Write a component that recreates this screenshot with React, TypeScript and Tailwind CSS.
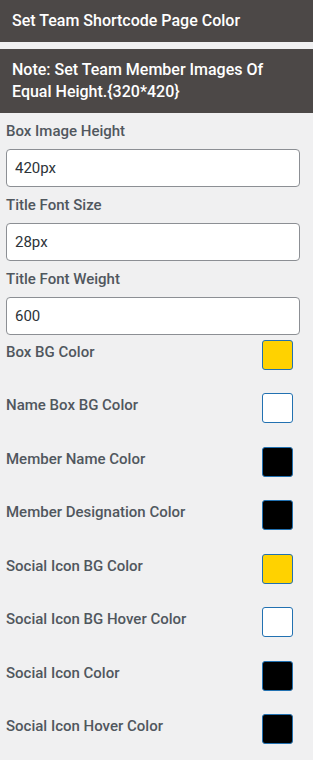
const fields = [
  { label: "Box Image Height", value: "420px" },
  { label: "Title Font Size", value: "28px" },
  { label: "Title Font Weight", value: "600" },
];

const colors = [
  { label: "Box BG Color", color: "bg-[#ffd200]" },
  { label: "Name Box BG Color", color: "bg-white" },
  { label: "Member Name Color", color: "bg-black" },
  { label: "Member Designation Color", color: "bg-black" },
  { label: "Social Icon BG Color", color: "bg-[#ffd200]" },
  { label: "Social Icon BG Hover Color", color: "bg-white" },
  { label: "Social Icon Color", color: "bg-black" },
  { label: "Social Icon Hover Color", color: "bg-black" },
];

export default function App() {
  return (
    <div className="min-h-screen bg-[#f0f0f1] font-['Roboto',sans-serif]">
      <div className="flex h-[42px] items-center bg-[#4c4847] px-3 text-[16px] font-medium text-white">
        Set Team Shortcode Page Color
      </div>
      <div className="mt-[7px] bg-[#4c4847] px-3 py-[10px] text-[16px] font-medium leading-[22px] text-white">
        <p>Note: Set Team Member Images Of</p>
        <p>Equal Height.{"{320*420}"}</p>
      </div>

      <div className="pl-[6px] pr-[13px]">
        {fields.map((f) => (
          <div key={f.label}>
            <label className="mt-2 mb-2 block text-[15px] font-medium leading-5 text-[#50575e]">
              {f.label}
            </label>
            <input
              readOnly
              value={f.value}
              className="h-[38px] w-full rounded-[4px] border border-[#8c8f94] bg-white px-2 text-[15px] text-[#2c3338] outline-none"
            />
          </div>
        ))}

        <div className="mt-[5px]">
          {colors.map((c) => (
            <div key={c.label} className="flex h-[53.43px] items-start justify-between">
              <span className="mt-[2px] text-[15px] font-medium leading-5 text-[#50575e]">
                {c.label}
              </span>
              <span
                className={`mr-[7px] block h-[30px] w-[31px] rounded-[3px] border border-[#2271b1] ${c.color}`}
              />
            </div>
          ))}
        </div>
      </div>
    </div>
  );
}
